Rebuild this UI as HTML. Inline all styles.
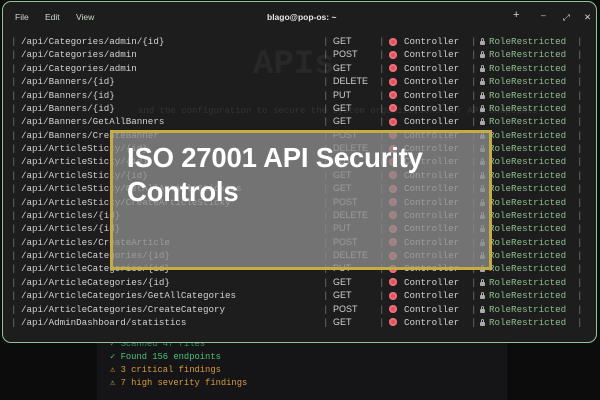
<!DOCTYPE html>
<html><head><meta charset="utf-8"><style>
*{margin:0;padding:0;box-sizing:border-box}
body{width:600px;height:400px;background:#0c0c0d;overflow:hidden;position:relative;font-family:"Liberation Mono",monospace}
.panel{position:absolute;left:97px;top:330px;width:410px;height:70px;background:#151517}
.win{position:absolute;left:2px;top:1px;width:595px;height:342px;background:#1d1d1d;border:1.5px solid #8fc496;border-radius:9px;overflow:hidden}
.tb{position:absolute;top:0;left:0;right:0;height:28px;font-family:"Liberation Sans",sans-serif;font-size:8.5px;color:#cfd8cf}
.tb span{position:absolute;top:10px}
.bg{position:absolute;left:250px;top:44px;font-size:34px;font-weight:bold;color:#282828}
.bgt{position:absolute;left:135px;top:104px;font-size:9px;color:#333}
.r{position:absolute;left:0;width:595px;height:13px;font-size:9.2px;line-height:13px;color:#d2d2d2;white-space:pre}
.r span{position:absolute;top:0}
.p{color:#777}
.m{font-family:"Liberation Sans",sans-serif;font-size:9px}
.i{width:8px;height:8px;border-radius:50%;background:#e8505a;top:2.5px!important;box-shadow:inset 0 0 0 2px #e8707a}
.g{color:#8dbd8d}
.lk{width:5px;height:4px;background:#aaa;top:6px!important;border-radius:1px}
.lk:before{content:"";position:absolute;left:1px;top:-3px;width:3px;height:3px;border:1px solid #aaa;border-bottom:none;border-radius:2px 2px 0 0;box-sizing:border-box}
.ov{position:absolute;left:110px;top:130px;width:382px;height:140px;background:rgba(140,140,140,0.78);border:3px solid #c4ad45}
.ov div{position:absolute;left:14px;font-family:"Liberation Sans",sans-serif;font-weight:bold;font-size:27.5px;color:#fff;letter-spacing:-0.2px}
.o{position:absolute;font-size:8.8px;white-space:pre}
</style></head><body>
<div class="panel"></div>
<div class="o" style="left:110px;top:339px;color:#3a8a5a">✓ Scanned 47 files</div>
<div class="o" style="left:110px;top:352px;color:#4cc07a">✓ Found 156 endpoints</div>
<div class="o" style="left:110px;top:365px;color:#d89a3a">⚠ 3 critical findings</div>
<div class="o" style="left:110px;top:378px;color:#d89a3a">⚠ 7 high severity findings</div>
<div class="win">
<div class="tb"><span style="left:12px">File</span><span style="left:42px">Edit</span><span style="left:73px">View</span><span style="left:264px;font-weight:bold;color:#e6e6e6">blago@pop-os: ~</span><span style="left:510px;font-size:11px;top:7px">+</span><span style="left:538px;top:8px">–</span><span style="left:560px">⤢</span><span style="left:581px">✕</span></div>
<div class="bg">APIs</div>
<div class="bgt">and the configuration to secure the system
 organizations for API endpoints</div>
<div id="rows"></div>
</div>
<div class="ov"><div style="top:9px">ISO 27001 API Security</div><div style="top:43px">Controls</div></div>
<script>
var d=[["/api/Categories/admin/{id}","GET"],["/api/Categories/admin","POST"],["/api/Categories/admin","GET"],["/api/Banners/{id}","DELETE"],["/api/Banners/{id}","PUT"],["/api/Banners/{id}","GET"],["/api/Banners/GetAllBanners","GET"],["/api/Banners/CreateBanner","POST"],["/api/ArticleSticky/{id}","DELETE"],["/api/ArticleSticky/{id}","PUT"],["/api/ArticleSticky/{id}","GET"],["/api/ArticleSticky/GetAllArticleStickies","GET"],["/api/ArticleSticky/CreateArticleSticky","POST"],["/api/Articles/{id}","DELETE"],["/api/Articles/{id}","PUT"],["/api/Articles/CreateArticle","POST"],["/api/ArticleCategories/{id}","DELETE"],["/api/ArticleCategories/{id}","PUT"],["/api/ArticleCategories/{id}","GET"],["/api/ArticleCategories/GetAllCategories","GET"],["/api/ArticleCategories/CreateCategory","POST"],["/api/AdminDashboard/statistics","GET"]];
var h="";d.forEach(function(r,k){var t=33+k*13.38;
h+='<div class="r" style="top:'+t+'px"><span class="p" style="left:8px">|</span><span style="left:18px">'+r[0]+'</span><span class="p" style="left:320px">|</span><span class="m" style="left:330px">'+r[1]+'</span><span class="p" style="left:376px">|</span><span class="i" style="left:386px"></span><span style="left:401px">Controller</span><span class="p" style="left:468px">|</span><span class="lk" style="left:477px"></span><span class="g" style="left:486px">RoleRestricted</span><span class="p" style="left:574px">|</span></div>';});
document.getElementById("rows").innerHTML=h;
</script>
</body></html>
